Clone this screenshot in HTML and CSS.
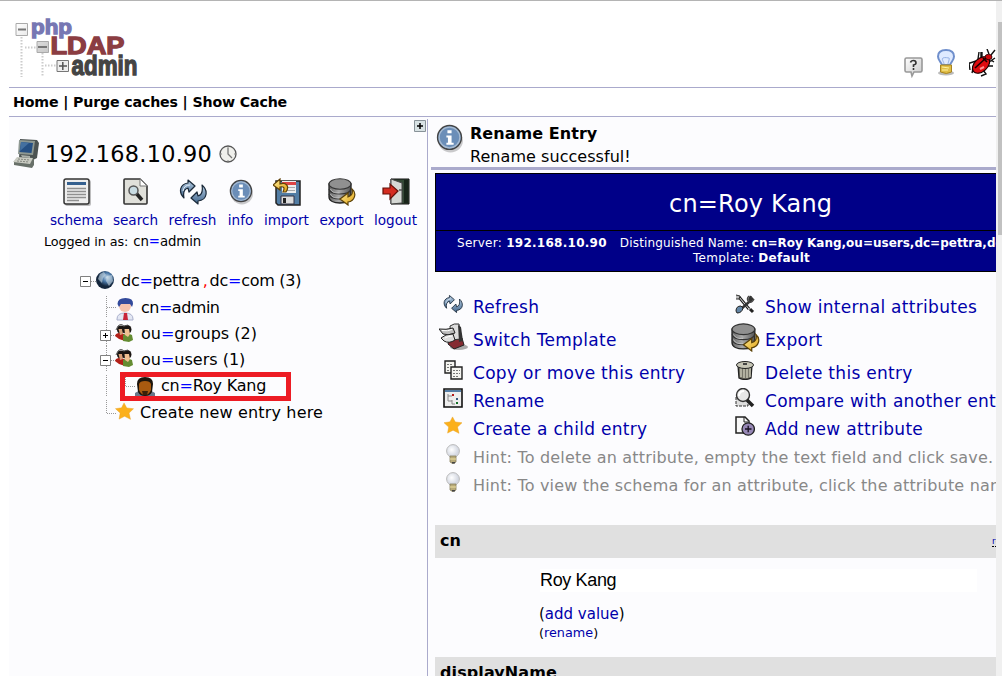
FILE: index.html
```
<!DOCTYPE html>
<html lang="en">
<head>
<meta charset="utf-8">
<title>phpLDAPadmin</title>
<link rel="stylesheet" href="styles.css">
</head>
<body>
<svg class="defs" width="0" height="0">
  <defs>
    <linearGradient id="blue" x2="0" y2="1"><stop stop-color="#b5cce2"/><stop offset="1" stop-color="#40658c"/></linearGradient>
    <linearGradient id="gray" x2="1"><stop stop-color="#666"/><stop offset=".45" stop-color="#aaa"/><stop offset="1" stop-color="#555"/></linearGradient>
    <linearGradient id="gold" x2="1" y2="1"><stop stop-color="#fff0a0"/><stop offset="1" stop-color="#e0a010"/></linearGradient>
    <radialGradient id="globe" cx=".6" cy=".35"><stop stop-color="#c8dcec"/><stop offset=".5" stop-color="#4a78a8"/><stop offset="1" stop-color="#14263c"/></radialGradient>
    <radialGradient id="glass" cx=".4" cy=".4"><stop stop-color="#fff"/><stop offset="1" stop-color="#d4d8e2"/></radialGradient>
    <linearGradient id="box" x2="1" y2="1"><stop stop-color="#fff"/><stop offset="1" stop-color="#c8c8c8"/></linearGradient>

    <symbol id="i-refresh" viewBox="0 0 28 28">
      <path d="M5 20C-1 14 1 6 9 5V2l7 6-6 6-1-4c-4 1-5 5-4 10z" fill="url(#blue)" stroke="#1b2a3a" stroke-width="1.200" stroke-linejoin="round"/>
      <path d="M23 7c6 5 6 15-4 16v3l-7-6 6-6 1 4c4-1 5-5 4-11z" fill="url(#blue)" stroke="#1b2a3a" stroke-width="1.200" stroke-linejoin="round"/>
      <path d="M4 13q1-6 7-6" fill="none" stroke="#e0ecf6" stroke-width="1"/>
    </symbol>
    <symbol id="i-info" viewBox="0 0 26 28">
      <ellipse cx="14" cy="16" rx="12" ry="11.500" fill="#000" opacity=".2"/>
      <circle cx="13" cy="13" r="11.500" fill="#6b8eb8" stroke="#444" stroke-width="1.400"/>
      <circle cx="13" cy="13" r="10" fill="none" stroke="#a8bcd2" stroke-width="1.200"/>
      <path d="M11 6h4v3h-4zM10 11h5v7h2v2h-7v-2h1.500v-5H10z" fill="#fff"/>
    </symbol>
    <symbol id="i-export" viewBox="0 0 28 28">
      <path d="M1 6v13c0 4 5 6 11 6s11-2 11-6V6z" fill="url(#gray)" stroke="#222" stroke-width="1.300"/>
      <ellipse cx="12" cy="6" rx="11" ry="5.200" fill="#909090" stroke="#333" stroke-width="1.100"/>
      <path d="M1 11c1 4 6 5 11 5s10-1 11-5M1 16c1 4 6 5 11 5s10-1 11-5" fill="none" stroke="#333" stroke-width="1.200"/>
      <path d="M2.500 11c2 4 5 4 9 4M2.500 16c2 4 5 4 9 4" fill="none" stroke="#ccc" stroke-width=".8"/>
      <path d="M24 11c5 4 3 12-4 13v3l-8-6 8-6v4c4-1 5-4 4-8z" fill="url(#gold)" stroke="#5c4208" stroke-width="1.200"/>
    </symbol>
    <symbol id="i-star" viewBox="0 0 20 20">
      <path d="M9.500 1l3 5.600L20 7.500l-5 4.800 1.700 7-6.600-3.500L4 19l1.200-6.700L0 7.400l6.700-.9z" fill="#fbb01c" stroke="#e8a020" stroke-width=".5"/>
    </symbol>
    <symbol id="i-bulb" viewBox="0 0 16 20">
      <circle cx="8" cy="7" r="6.400" fill="url(#glass)" stroke="#bbb"/>
      <path d="M5 12h6v6q-3 3-6 0z" fill="#b8aa78" stroke="#888060" stroke-width=".8"/>
      <path d="M5 15h6" stroke="#eee0a0"/><path d="M7 18h3v1.500H7z" fill="#444"/>
    </symbol>
    <symbol id="i-people" viewBox="0 0 18 18">
      <path d="M1 10l5-2 4 3v6L4 15 0 12z" fill="#b32018"/>
      <path d="M8 11l4-2 5 2 1 5-4 2-6-1z" fill="#648c32"/>
      <circle cx="6" cy="5.500" r="4" fill="#1a1512"/><path d="M3.500 5l3.500 0 1 5-3 1z" fill="#d8a078"/>
      <circle cx="12" cy="5.500" r="4.500" fill="#1a1512"/><path d="M9.500 5h4.500l1 5-2 3-3-2z" fill="#f0c090"/>
      <path d="M1 6l2-4 3-2 3 2 4-1" fill="none" stroke="#555"/>
    </symbol>
    <symbol id="i-plus" viewBox="0 0 11 11"><path d="M.5.5h10v10H.5z" fill="#fff" stroke="#808080"/><path d="M3 5.500h5M5.500 3v5" stroke="#000"/></symbol>
    <symbol id="i-minus" viewBox="0 0 11 11"><path d="M.5.5h10v10H.5z" fill="#fff" stroke="#808080"/><path d="M3 5.500h5" stroke="#000"/></symbol>
  </defs>
</svg>

<div class="window">
  <div class="page">
    <header class="header">
      <svg class="logo" width="126" height="62" viewBox="14 17 126 62">
        <path d="M21.500 37v40M42.500 53v24M25 47.500h11M45 65.500h11" stroke="#ccc" stroke-width="2" stroke-dasharray="1.500 1.500"/>
        <path d="M16 23.500h11.500v12H16zM37 41.500h11.500v11H37z" fill="url(#box)" stroke="#aaa"/>
        <path d="M18 29.500h8M38 47h9" stroke="#777" stroke-width="2"/>
        <text class="logo-php" x="31" y="34" textLength="41" lengthAdjust="spacingAndGlyphs">php</text>
        <text class="logo-ldap" x="50.500" y="54" textLength="74" lengthAdjust="spacingAndGlyphs">LDAP</text>
        <text class="logo-admin" x="71.500" y="75" textLength="66" lengthAdjust="spacingAndGlyphs">admin</text>
        <path d="M57 60.500h11.500v11H57z" fill="#eee" stroke="#777"/><path d="M59 66h8M62.800 62v8" stroke="#555" stroke-width="1.500"/>
      </svg>
      <div class="header-icons">
        <svg class="icon-help" width="19" height="21" viewBox="0 0 19 21">
          <path d="M2.500 1h14Q18 1 18 2.500v11q0 1.500-1.500 1.500H10l-2 4-1-4H2.500Q1 15 1 13.500v-11Q1 1 2.500 1z" fill="url(#box)" stroke="#999" stroke-width="1.600"/>
          <path d="M6.500 5.500Q7 3.500 9.500 3.500T12 6Q12 7.500 9.500 8v2M9.500 11v2" fill="none" stroke="#333" stroke-width="1.600"/>
        </svg>
        <svg width="18" height="27" viewBox="0 0 18 27">
          <ellipse cx="9" cy="24" rx="8" ry="2.500" fill="#bbb"/>
          <path d="M5 16C4 13 1 11 1 7.500 1 3 4.500 1 9 1s8 2 8 6.500C17 11 14 13 13 16z" fill="#dfeaff" stroke="#6f8fcc" stroke-width="2"/>
          <path d="M7 15c0-2-3-5-1-6s5 0 6 0-1 5-1 6" fill="none" stroke="#94b0e4"/>
          <path d="M3.500 16h11v7q-5 3-11 0z" fill="#e0bd45" stroke="#a78420"/>
          <path d="M5 18l7 1M5 21h6" stroke="#fff3a0"/>
        </svg>
        <svg class="icon-bug" width="27" height="28" viewBox="0 0 27 28">
          <path d="M9 10L10 3M12 9l0-6M13 9V3M20 5l-2-5M22 6l4-5M2 14H0l1 7M7 12L1 14M22 11l3 2M18 17l6 0M14 21l3 4-5 2M4 20l-1 4M20 13l6-4" fill="none" stroke="#111" stroke-width="1.400"/>
          <ellipse cx="12" cy="16" rx="10" ry="6.500" transform="rotate(-42 12 16)" fill="#df0c10" stroke="#180000" stroke-width="1.200"/>
          <ellipse cx="19.500" cy="8" rx="3.500" ry="2.700" fill="#d0080c" stroke="#180000" stroke-width=".8"/>
          <path d="M6 19L17 9M14 9l4 4" stroke="#180000" stroke-width="1.600"/><path d="M11 20l4-2" stroke="#ff9090" stroke-width="2"/>
        </svg>
      </div>
    </header>

    <nav class="menu"><span class="menu-text">Home | Purge caches | Show Cache</span></nav>

    <div class="columns">
      <aside class="sidebar">
        <svg class="expand" width="12" height="12" viewBox="0 0 12 12"><path d="M.5.5h11v11H.5z" fill="#d8e2e4" stroke="#889298"/><path d="M3 6h6M6 3v6" stroke="#000" stroke-width="1.500"/></svg>
        <div class="server">
          <svg width="28" height="31" viewBox="0 0 28 31">
            <path d="M7 1l17 1 2 3-2 15-4 2-14-2z" fill="#4c5352"/>
            <path d="M6 2l16 1-2 14-15-1z" fill="#8e9892"/><path d="M8 4l12 1-1.500 10-12-1z" fill="#254f83"/><path d="M8 4l8 1-9 8z" fill="#4470a0"/>
            <path d="M4 20l17 1v6l-2 3L1 27v-3z" fill="#687069"/>
            <path d="M4 19l16 1-3 6L0 24z" fill="#c9cbc2"/><path d="M5 21l12 1M4 23l12 1" stroke="#858880" stroke-dasharray="2 1"/><path d="M8 17l9 1v2l-8-1z" fill="#aab0aa"/>
          </svg>
          <span class="server-name">192.168.10.90</span>
          <svg class="clock" width="18" height="18" viewBox="0 0 18 18"><circle cx="9" cy="9" r="8" fill="#f0f0ec" stroke="#555" stroke-width="1.300"/><path d="M9 3v6l4 4" fill="none" stroke="#777" stroke-width="1.300"/><path d="M9 2v1M9 15v1M2 9h1M15 9h1" stroke="#888"/></svg>
        </div>
        <div class="toolbar">
          <a class="tool w-schema"><svg width="28" height="28" viewBox="0 0 28 28"><rect x="2" y="2" width="26" height="26" rx="2" fill="#000" opacity=".25"/><rect x="1" y="1" width="25" height="25" rx="2" fill="#eee" stroke="#333" stroke-width="1.500"/><path d="M4 4h19v3H4z" fill="#35608f"/><path d="M4 10.500h19M4 13.500h19M4 16.500h19M4 19.500h19M4 22.500h12" stroke="#909090" stroke-width="1.300"/></svg><span>schema</span></a>
          <a class="tool w-search"><svg width="26" height="28" viewBox="0 0 26 28"><path d="M2 1h15l7 7v17q0 1-1 1H2q-1 0-1-1V2q0-1 1-1z" fill="#e0e0da" stroke="#333" stroke-width="1.600"/><path d="M17 1v7h7z" fill="#fff" stroke="#777"/><path d="M13 15l6 7" stroke="#222" stroke-width="3.500"/><circle cx="10.500" cy="12.500" r="4.500" fill="#c8dbe2" stroke="#555" stroke-width="1.500"/></svg><span>search</span></a>
          <a class="tool w-refresh"><svg width="28" height="28"><use href="#i-refresh"/></svg><span>refresh</span></a>
          <a class="tool w-info"><svg width="24" height="28"><use href="#i-info"/></svg><span>info</span></a>
          <a class="tool w-import"><svg width="28" height="28" viewBox="0 0 28 28"><path d="M3 3h24v24H5l-2-2z" fill="#527da4" stroke="#222" stroke-width="1.500"/><path d="M9 3h14v12H9z" fill="#eee"/><path d="M9 4h14v3H9z" fill="#dd4545"/><path d="M10 9.500h12M10 12.500h12" stroke="#aaa"/><path d="M8 18h13v8H8z" fill="#ddd" stroke="#334"/><path d="M10 20h3v5h-3z" fill="#222"/><path d="M13 14c4-6 0-10-6-8V1L0 7l7 5V9c4-1 5 1 3 5z" fill="url(#gold)" stroke="#604208" stroke-width="1.200"/></svg><span>import</span></a>
          <a class="tool w-export"><svg width="28" height="28"><use href="#i-export"/></svg><span>export</span></a>
          <a class="tool w-logout"><svg width="28" height="28" viewBox="0 0 28 28"><path d="M9 1h18v25H9z" fill="#344936" stroke="#111"/><path d="M22 2h4v23h-4z" fill="#18251a"/><path d="M9 1l11 4v20l-11 1z" fill="#d5d8d4" stroke="#444"/><path d="M17 12h3" stroke="#555" stroke-width="1.500"/><path d="M1 10h7V6l8 7-8 8v-5H1z" fill="#d42c20" stroke="#631008" stroke-width="1.200"/></svg><span>logout</span></a>
        </div>
        <div class="logged"><span class="logged-label">Logged in as:</span><span class="logged-user">cn<i>=</i>admin</span></div>

        <div class="tree">
          <div class="node node-root"><svg width="44" height="26" viewBox="77 267 44 26"><path d="M91 281.500h6" class="dots"/><use href="#i-minus" x="80" y="276" width="11" height="11"/><circle cx="105" cy="280" r="9" fill="url(#globe)"/><path d="M100 274l4-2 2 3-3 3-1 5-4-4zM107 276l5-1 1 6-4 5-3-5z" fill="#d5e2e8" opacity=".55"/></svg><span class="t-root">dc<i>=</i>pettra<b class="comma">,</b>dc<i>=</i>com (3)</span></div>
          <div class="node node-admin"><svg width="64" height="28" viewBox="77 293 64 28"><path d="M106.500 296v22M107 307.500h9" class="dots"/><path d="M117 319q0-6 8-6t8 6v1h-16z" fill="#e3e7f3" stroke="#aab0cc"/><path d="M124 313h3l1 7h-5z" fill="#c82438"/><ellipse cx="125" cy="306" rx="6" ry="6" fill="#f6c3ae"/><path d="M117.500 304q0-6 8-6t7.500 6l-1 3-2-3h-9l-2 3z" fill="#334a9b"/></svg><span class="t-admin">cn<i>=</i>admin</span></div>
          <div class="node node-groups"><svg width="64" height="25" viewBox="77 321 64 25"><path d="M106.500 321v25M111 335.500h5" class="dots"/><use href="#i-plus" x="100" y="330" width="11" height="11"/><use href="#i-people" x="115" y="324" width="18" height="18"/></svg><span class="t-groups">ou<i>=</i>groups (2)</span></div>
          <div class="node node-users"><svg width="64" height="26" viewBox="77 346 64 26"><path d="M106.500 346v26M111 360.500h5" class="dots"/><use href="#i-minus" x="100" y="355" width="11" height="11"/><use href="#i-people" x="115" y="349" width="18" height="18"/></svg><span class="t-users">ou<i>=</i>users (1)</span></div>
          <div class="node node-roy"><svg width="84" height="26" viewBox="77 372 84 26"><path d="M106.500 375v22M125.500 375v12M126 386.500h9" class="dots"/><path d="M135 396v-3q4-3 10-3t10 3v3z" fill="#68788a"/><path d="M137 384q0-7 8-7t8 7l-1 8q-2 4-7 4t-7-4z" fill="#1c140c"/><path d="M139 384q1-3 6-3t6 3v6q-2 5-6 5t-6-5z" fill="#a85a10"/><path d="M142 391h6l-1 4h-4z" fill="#3a2008"/></svg><span class="t-roy">cn<i>=</i>Roy Kang</span><div class="highlight"></div></div>
          <div class="node node-new"><svg width="63" height="28" viewBox="77 398 63 28"><path d="M106.500 400v13M107 413.500h9" class="dots"/><use href="#i-star" x="115" y="402" width="19" height="18"/></svg><span class="t-new">Create new entry here</span></div>
        </div>
      </aside>

      <main class="main">
        <section class="message">
          <svg width="27" height="29"><use href="#i-info"/></svg>
          <div class="message-text"><strong>Rename Entry</strong><span>Rename successful!</span></div>
        </section>
        <section class="title">
          <h1><span>cn=Roy Kang</span></h1>
          <div class="subtitle">
            <div><span class="s-server">Server: <b>192.168.10.90</b></span><span class="s-dn">Distinguished Name: <b>cn=Roy Kang,ou=users,dc=pettra,dc=com</b></span></div>
            <div class="s-template">Template: <b>Default</b></div>
          </div>
        </section>

        <section class="actions">
          <div class="action r-small"><svg width="20" height="20"><use href="#i-refresh"/></svg><a>Refresh</a></div>
          <div class="action r-small"><svg width="20" height="20" viewBox="0 0 20 20"><path d="M4 3l10 12M15 15l3 3" stroke="#222" stroke-width="3"/><path d="M4 3l10 12" stroke="#ddd"/><path d="M1 1l4 1-1 3-3 0" fill="#bbb" stroke="#333"/><path d="M16 2l-2 4M18 4l-4 4-8 7" fill="none" stroke="#333" stroke-width="2.500"/><path d="M14 2q-3 3 0 6 3 1 5-3" fill="none" stroke="#444" stroke-width="1.500"/><path d="M1 17q0-5 5-5l2 2q-1 5-6 5z" fill="#6385a5" stroke="#222"/></svg><a>Show internal attributes</a></div>
          <div class="action r-large"><svg class="big" width="29" height="29" viewBox="0 0 29 29"><ellipse cx="20" cy="24" rx="9" ry="3" fill="#aaa"/><path d="M10 17l13-2 2 7-10 4-6-5z" fill="#852b32" stroke="#222"/><path d="M11 3q4-3 9-2l2 15-10 1z" fill="#ddd" stroke="#333"/><path d="M19 2l3 2 2 14-4 1z" fill="#333"/><path d="M0 6q7 1 14-1l2 5q-7 3-12 1z" fill="#bbb" stroke="#222"/><path d="M2 15q4-4 12-4l2 6q-6 4-11 1z" fill="#ddd" stroke="#222"/><path d="M3 7.500q6 1 10-1M6 15q4-2 7-2" fill="none" stroke="#fff"/></svg><a>Switch Template</a></div>
          <div class="action r-large"><svg class="big" width="29" height="29"><use href="#i-export"/></svg><a>Export</a></div>
          <div class="action r-small"><svg width="20" height="20" viewBox="0 0 20 20"><path d="M2 1h10v12H2z" fill="#f5f5f1" stroke="#222" stroke-width="1.400"/><path d="M4 4.500h6M4 7.500h3M4 10.500h3" stroke="#777" stroke-dasharray="2 1"/><path d="M8 7h11v12H8z" fill="#f5f5f1" stroke="#222" stroke-width="1.400"/><path d="M10 10.500h7M10 13.500h7M10 16.500h5" stroke="#777" stroke-dasharray="2 1"/></svg><a>Copy or move this entry</a></div>
          <div class="action r-small"><svg width="20" height="20" viewBox="0 0 20 20"><path d="M2 6h16M3 5l1 13q6 3 12 0l1-13z" fill="#77766a" stroke="#222" stroke-width="1.300"/><path d="M6 8v9M9 8v10M12 8v10M15 8v9" stroke="#d9d7c5" stroke-width="1.200"/><ellipse cx="10" cy="5" rx="8.500" ry="3.500" fill="#c6c5b6" stroke="#222"/><path d="M8 3h4v2H8z" fill="#444"/></svg><a>Delete this entry</a></div>
          <div class="action r-small"><svg width="20" height="20" viewBox="0 0 20 20"><path d="M1 1h18v18H1z" fill="#eee" stroke="#111" stroke-width="1.600"/><path d="M2 2h16v2H2z" fill="#557da4"/><path d="M5 6v7h4M5 8h4M9 12v4h3" fill="none" stroke="#888"/><path d="M9 6h2v2H9z" fill="#b51818"/><path d="M13 10h2v2h-2z" fill="#3a597b"/><path d="M13 14h2v2h-2z" fill="#147025"/></svg><a>Rename</a></div>
          <div class="action r-small"><svg width="20" height="20" viewBox="0 0 20 20"><path d="M1 8h12v10H1z" fill="#ddd" stroke="#333" stroke-dasharray="3 1"/><circle cx="8" cy="7" r="6.500" fill="#e7e7e7" stroke="#333" stroke-width="1.400"/><path d="M4 8q0-5 5-5" fill="none" stroke="#fff" stroke-width="2"/><path d="M12 12l6 6" stroke="#222" stroke-width="3.500"/></svg><a>Compare with another entry</a></div>
          <div class="action r-small"><svg width="20" height="20"><use href="#i-star" x="1" y="0" width="18" height="18"/></svg><a>Create a child entry</a></div>
          <div class="action r-small"><svg width="20" height="20" viewBox="0 0 20 20"><path d="M1 1h9l4 4v12H1z" fill="#f8f8f8" stroke="#222" stroke-width="1.500"/><path d="M9 1v5h4" fill="none" stroke="#222"/><circle cx="13.200" cy="13" r="6.200" fill="#9687b5" stroke="#222" stroke-width="1.300"/><path d="M10 13h6.500M13.200 9.700v6.600" stroke="#181020" stroke-width="1.300"/></svg><a>Add new attribute</a></div>
          <div class="action hint"><svg width="20" height="20"><use href="#i-bulb"/></svg><span>Hint: To delete an attribute, empty the text field and click save.</span></div>
          <div class="action hint"><svg width="20" height="20"><use href="#i-bulb"/></svg><span>Hint: To view the schema for an attribute, click the attribute name.</span></div>
        </section>

        <section class="attribute">
          <div class="attr-name"><b>cn</b><span class="note">required</span></div>
          <div class="attr-body">
            <input class="value" type="text" value="Roy Kang">
            <div class="add">(<a>add value</a>)</div>
            <div class="rename">(<a>rename</a>)</div>
          </div>
          <div class="attr-name"><b>displayName</b></div>
        </section>
      </main>
    </div>
  </div>
  <div class="scrollbar"><div class="thumb"></div></div>
</div>
</body>
</html>
```
FILE: styles.css
```
* { box-sizing: border-box; }
body { margin: 0; background: #fff; color: #000; font-family: Verdana, "DejaVu Sans", sans-serif; font-size: 16px; }
svg { display: block; flex: none; }
.defs { position: absolute; }
.window { display: flex; width: 1002px; height: 676px; overflow: hidden; border-top: 1px solid #b4b4b4; }
.page { width: 996px; padding-left: 9px; overflow: hidden; display: flex; flex-direction: column; }
.scrollbar { width: 6px; background: #f0f0f0; padding: 21px 0 0 2px; }
.thumb { height: 213px; background: #c1c1c1; }

.header { height: 87px; flex: none; border-bottom: 1px solid #aaaacc; display: flex; justify-content: space-between; padding: 16px 0 0 5px; }
.logo { overflow: visible; }
.logo text { font-family: "Liberation Sans", Arial, sans-serif; font-weight: bold; stroke-width: 1.300px; }
.logo-php { font-size: 21px; fill: #7777b3; stroke: #7777b3; }
.logo-ldap { font-size: 24.500px; fill: #8b3d42; stroke: #8b3d42; }
.logo-admin { font-size: 27px; fill: #444; stroke: #444; }
.header-icons { display: flex; align-items: flex-start; gap: 15px; padding-top: 32px; }
.icon-help { margin: 8px -1px 0 0; }
.icon-bug { margin-left: -1px; }

.menu { height: 29px; flex: none; border-bottom: 1px solid #aaaacc; padding-left: 4px; font-size: 14.200px; letter-spacing: -.16px; font-weight: bold; line-height: 29px; white-space: nowrap; }

.columns { flex: 1; display: flex; min-height: 0; background: #fcfcfe; }
.sidebar { width: 419px; margin-top: 2px; flex: none; border-right: 1px solid #aaaacc; position: relative; }
.expand { position: absolute; right: 1px; top: 1px; }
.server { display: flex; align-items: center; height: 58px; padding: 11px 0 0 4px; font-size: 22.400px; }
.server-name { margin-left: 4px; line-height: 30px; letter-spacing: .25px; white-space: nowrap; }
.clock { margin-left: 7px; }
.toolbar { display: flex; padding: 1px 0 0 36px; height: 54px; }
.tool { display: flex; flex-direction: column; align-items: center; gap: 5px; color: #0000aa; font-size: 13.600px; line-height: 18px; white-space: nowrap; }
.w-schema { width: 63px; } .w-search { width: 55px; } .w-refresh { width: 59px; } .w-info { width: 37px; }
.w-import { width: 55px; } .w-export { width: 55px; } .w-logout { width: 53px; }
.logged { display: flex; align-items: center; gap: 5px; height: 20px; padding-left: 35px; white-space: nowrap; }
.logged-label { font-size: 12.800px; letter-spacing: -.1px; }
.logged-user { font-size: 13.300px; letter-spacing: -.1px; }
i { font-style: normal; color: #0000ff; }

.tree { padding: 16px 0 0 68px; }
.node { display: flex; align-items: center; white-space: nowrap; position: relative; }
.dots { stroke: #999; stroke-dasharray: 1 1; fill: none; }
.comma { color: #ff0000; font-weight: normal; margin: 0 2px 0 3px; }
.t-root { letter-spacing: -.28px; }
.t-admin { letter-spacing: -.5px; }
.t-roy { letter-spacing: -.2px; }
.t-new { letter-spacing: .15px; }
.node-root { height: 26px; } .node-admin { height: 28px; } .node-groups { height: 25px; }
.node-users { height: 26px; } .node-roy { height: 26px; } .node-new { height: 28px; }
.highlight { position: absolute; left: 43px; top: 0; width: 171px; height: 29px; border: 5px solid #ed1c24; z-index: 1; }

.main { margin: 2px 0 0 3px; flex: 1; min-width: 0; }
.message { height: 51px; border-bottom: 3px solid #aaaacc; display: flex; padding: 5px 0 0 5px; gap: 7px; }
.message-text { display: flex; flex-direction: column; line-height: 23px; margin-top: -2px; letter-spacing: .05px; white-space: nowrap; }
.title { margin: 3px 0 0 4px; width: 636px; height: 99px; background: #000088; border: 1px solid #000; color: #fff; }
h1 { margin: 0; height: 57px; border-bottom: 1px solid #000; font-size: 24px; font-weight: normal; letter-spacing: .2px; line-height: 61px; padding-left: 233px; white-space: nowrap; }
.subtitle { padding-top: 5px; font-size: 12px; letter-spacing: .27px; line-height: 15px; white-space: nowrap; }
.s-server { padding-left: 21px; }
.s-dn { padding-left: 13px; letter-spacing: .15px; }
.s-dn b { letter-spacing: 0; }
.s-template { padding-left: 257px; }

.actions { padding: 20px 0 0 8px; display: grid; grid-template-columns: 292px 1fr; }
.action { display: flex; align-items: center; gap: 10px; padding: 2px 0 0 4px; white-space: nowrap; color: #0000aa; font-size: 17px; letter-spacing: .3px; }
.action svg { margin-bottom: 7px; }
.action svg.big { margin: 0 -5px 6px -4px; }
.r-small { height: 28px; }
.r-large { height: 38px; }
.hint { grid-column: 1 / 3; height: 28px; color: #888; font-size: 16px; letter-spacing: .18px; }

.attribute { padding: 27px 0 0 4px; }
.attr-name { height: 33px; background: #e0e0e0; padding: 0 0 0 5px; display: flex; align-items: center; white-space: nowrap; }
.attr-name b { width: 552px; line-height: 29px; margin-bottom: 3px; letter-spacing: .1px; flex: none; }
.note { font-size: 9px; border-bottom: 1px dotted #000; color: #0000aa; line-height: 9px; }
.attr-body { height: 99px; padding: 11px 0 0 104px; }
.value { display: block; margin: 0 0 0 1px; width: 437px; height: 23px; padding: 0; border: 0; background: #fff; color: #000; font-family: "Liberation Sans", Arial, sans-serif; font-size: 18px; letter-spacing: -.35px; }
.add, .rename { white-space: nowrap; }
.add { font-size: 15px; line-height: 20px; margin-top: 12px; }
.rename { font-size: 12.800px; line-height: 18px; }
.add a, .rename a { color: #0000aa; }
```
